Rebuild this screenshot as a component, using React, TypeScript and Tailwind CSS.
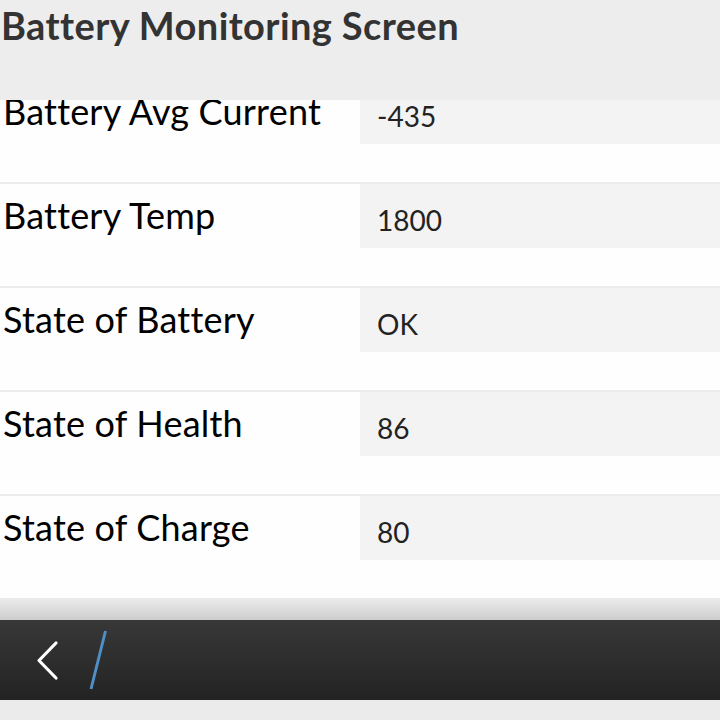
import React from "react";

const rows = [
  { label: "Battery Avg Current", value: "-435" },
  { label: "Battery Temp", value: "1800" },
  { label: "State of Battery", value: "OK" },
  { label: "State of Health", value: "86" },
  { label: "State of Charge", value: "80" },
];

export default function App() {
  return (
    <div className="w-[720px] h-[720px] flex flex-col overflow-hidden bg-[#fefefe]" style={{ fontFamily: "Lato, 'Open Sans', sans-serif" }}>
      <div className="h-[100px] shrink-0 bg-[#ededed] relative z-10">
        <div className="pl-[1px] pt-[3px] text-[38px] leading-[44px] tracking-[0.4px] font-bold text-[#333333]">Battery Monitoring Screen</div>
      </div>
      <div className="h-[498px] shrink-0 overflow-hidden">
        <div className="-mt-[22px]">
          {rows.map((r) => (
            <div key={r.label} className="h-[104px] border-t-2 border-[#ececec] flex items-start">
              <div className="w-[360px] h-[64px] flex items-center pl-[3px] text-[36px] text-black">
                <span className="leading-[40px] -mt-[3px] tracking-[0.2px]">{r.label}</span>
              </div>
              <div className="flex-1 h-[64px] bg-[#f3f3f3] flex items-center pl-[17px] text-[28px] text-[#222222]">
                <span className="leading-[32px] mt-[7px]">{r.value}</span>
              </div>
            </div>
          ))}
        </div>
      </div>
      <div className="h-[22px] shrink-0 bg-gradient-to-b from-[#ececec] to-[#cdcdcd]" />
      <div className="h-[80px] shrink-0 bg-gradient-to-b from-[#383838] to-[#232323] flex items-center">
        <svg width="120" height="80" viewBox="0 0 120 80" className="shrink-0">
          <polyline points="56,23 39,40.5 56,58" fill="none" stroke="#ffffff" strokeWidth="3.2" strokeLinecap="round" strokeLinejoin="round" />
          <line x1="105.5" y1="11" x2="91" y2="69" stroke="#4f8fc6" strokeWidth="3" />
        </svg>
      </div>
      <div className="h-[20px] shrink-0 bg-[#ebebeb]" />
    </div>
  );
}
